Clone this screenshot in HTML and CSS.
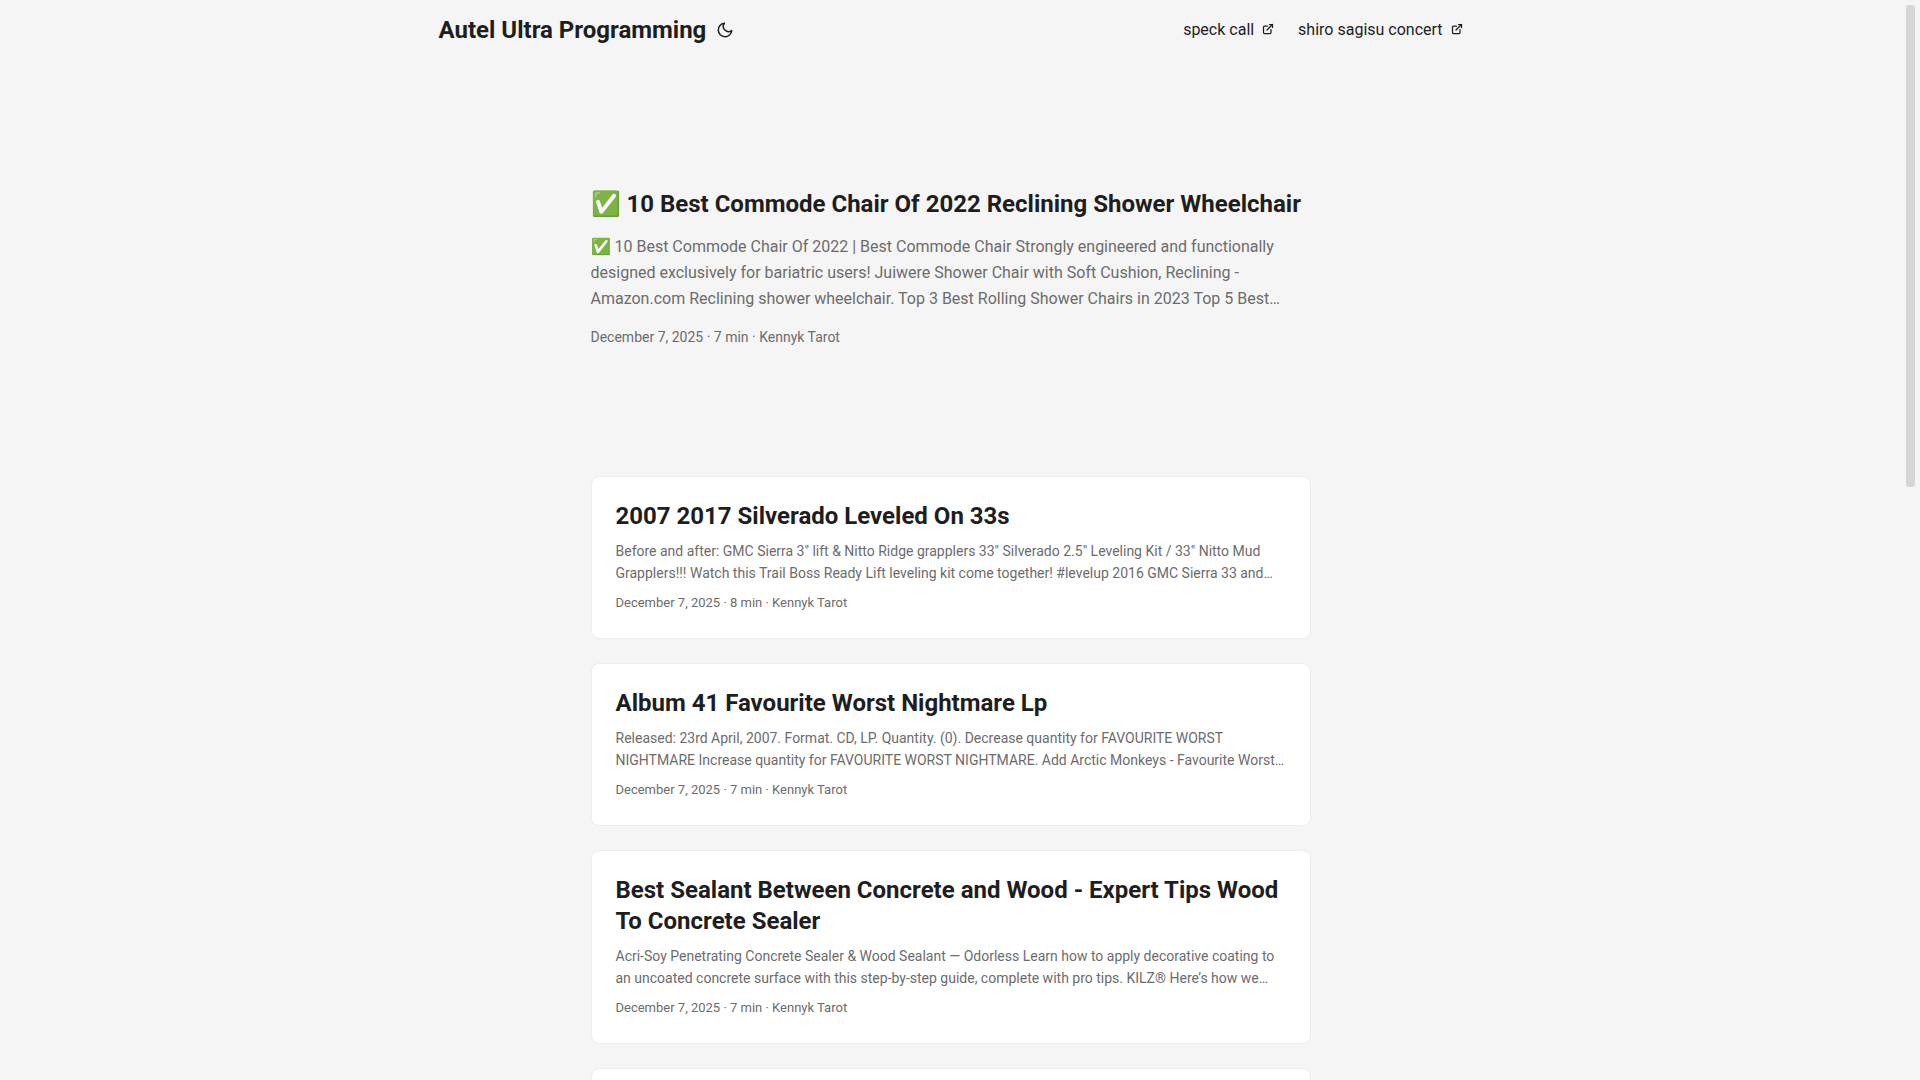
FILE: index.html
```html
<!DOCTYPE html>
<html lang="en">
<head>
    <meta charset="UTF-8">
    <meta name="viewport" content="width=device-width, initial-scale=1.0">
    <title>Autel Ultra Programming</title>
    <link rel="stylesheet" href="styles.css">
</head>
<body>
    <div class="page">
        <header class="header">
            <nav class="nav">
                <div class="logo">
                    <a href="#">Autel Ultra Programming</a>
                    <button class="theme-toggle" aria-label="Toggle theme">
                        <svg width="18" height="18" viewBox="0 0 24 24" fill="none" stroke="currentColor" stroke-width="2" stroke-linecap="round" stroke-linejoin="round">
                            <path d="M21 12.79A9 9 0 1 1 11.21 3 7 7 0 0 0 21 12.79z"></path>
                        </svg>
                    </button>
                </div>
                <ul class="menu">
                    <li>
                        <a href="#">speck call&nbsp;
                            <svg width="12" height="12" viewBox="0 0 24 24" fill="none" stroke="currentColor" stroke-width="2.5" stroke-linecap="round" stroke-linejoin="round">
                                <path d="M18 13v6a2 2 0 0 1-2 2H5a2 2 0 0 1-2-2V8a2 2 0 0 1 2-2h6"></path>
                                <path d="M15 3h6v6"></path>
                                <path d="M10 14L21 3"></path>
                            </svg>
                        </a>
                    </li>
                    <li>
                        <a href="#">shiro sagisu concert&nbsp;
                            <svg width="12" height="12" viewBox="0 0 24 24" fill="none" stroke="currentColor" stroke-width="2.5" stroke-linecap="round" stroke-linejoin="round">
                                <path d="M18 13v6a2 2 0 0 1-2 2H5a2 2 0 0 1-2-2V8a2 2 0 0 1 2-2h6"></path>
                                <path d="M15 3h6v6"></path>
                                <path d="M10 14L21 3"></path>
                            </svg>
                        </a>
                    </li>
                </ul>
            </nav>
        </header>

        <main class="main">
            <article class="first-entry">
                <h2>✅ 10 Best Commode Chair Of 2022 Reclining Shower Wheelchair</h2>
                <p class="entry-content">✅ 10 Best Commode Chair Of 2022 | Best Commode Chair Strongly engineered and functionally designed exclusively for bariatric users! Juiwere Shower Chair with Soft Cushion, Reclining - Amazon.com Reclining shower wheelchair. Top 3 Best Rolling Shower Chairs in 2023 Top 5 Best…</p>
                <footer class="entry-footer">December 7, 2025 · 7 min · Kennyk Tarot</footer>
            </article>

            <article class="post-entry">
                <h2>2007 2017 Silverado Leveled On 33s</h2>
                <p class="entry-content">Before and after: GMC Sierra 3" lift &amp; Nitto Ridge grapplers 33" Silverado 2.5" Leveling Kit / 33" Nitto Mud Grapplers!!! Watch this Trail Boss Ready Lift leveling kit come together! #levelup 2016 GMC Sierra 33 and…</p>
                <footer class="entry-footer">December 7, 2025 · 8 min · Kennyk Tarot</footer>
            </article>

            <article class="post-entry">
                <h2>Album 41 Favourite Worst Nightmare Lp</h2>
                <p class="entry-content">Released: 23rd April, 2007. Format. CD, LP. Quantity. (0). Decrease quantity for FAVOURITE WORST NIGHTMARE Increase quantity for FAVOURITE WORST NIGHTMARE. Add Arctic Monkeys - Favourite Worst…</p>
                <footer class="entry-footer">December 7, 2025 · 7 min · Kennyk Tarot</footer>
            </article>

            <article class="post-entry">
                <h2>Best Sealant Between Concrete and Wood - Expert Tips Wood To Concrete Sealer</h2>
                <p class="entry-content">Acri-Soy Penetrating Concrete Sealer &amp; Wood Sealant — Odorless Learn how to apply decorative coating to an uncoated concrete surface with this step-by-step guide, complete with pro tips. KILZ® Here’s how we…</p>
                <footer class="entry-footer">December 7, 2025 · 7 min · Kennyk Tarot</footer>
            </article>

            <article class="post-entry"></article>
        </main>
    </div>

    <div class="scrollbar" aria-hidden="true">
        <div class="scrollbar-thumb"></div>
    </div>
</body>
</html>
```
FILE: styles.css
```css
* {
    box-sizing: border-box;
    margin: 0;
    padding: 0;
}

body {
    display: flex;
    align-items: flex-start;
    height: 100vh;
    overflow: hidden;
    background: #f5f5f5;
    color: #1e1e1e;
    font-family: Roboto, "Open Sans", sans-serif;
    font-size: 16px;
    line-height: 26px;
}

a {
    color: inherit;
    text-decoration: none;
}

.page {
    flex: 1;
}

/* scrollbar */
.scrollbar {
    width: 19px;
    height: 100vh;
    padding: 5px;
}

.scrollbar-thumb {
    height: 45%;
    background: #d6d6d6;
    border-radius: 3px;
}

/* header */
.nav {
    display: flex;
    justify-content: space-between;
    max-width: 1072px;
    margin: 0 auto;
    padding: 0 24px;
    line-height: 60px;
}

.logo {
    display: flex;
    align-items: center;
    font-size: 24px;
    font-weight: 700;
}

.theme-toggle {
    display: flex;
    padding: 10px;
    border: none;
    background: none;
    color: inherit;
    cursor: pointer;
}

.menu {
    display: flex;
    gap: 24px;
    list-style: none;
}

/* posts */
.main {
    max-width: 768px;
    margin: 0 auto;
    padding: 24px 24px 0;
}

h2 {
    font-size: 24px;
    line-height: 31px;
}

.entry-content,
.entry-footer {
    color: #6c6c6c;
}

.first-entry {
    display: flex;
    flex-direction: column;
    justify-content: center;
    min-height: 320px;
    margin: 24px 0 48px;
}

.first-entry .entry-content {
    margin: 14px 0;
}

.first-entry .entry-footer {
    font-size: 14px;
    line-height: 22px;
}

.post-entry {
    min-height: 163px;
    margin-bottom: 24px;
    padding: 24px;
    background: #fff;
    border: 1px solid #eee;
    border-radius: 8px;
}

.post-entry .entry-content {
    margin: 8px 0;
    font-size: 14px;
    line-height: 22px;
}

.post-entry .entry-footer {
    font-size: 13px;
    line-height: 22px;
}
```
